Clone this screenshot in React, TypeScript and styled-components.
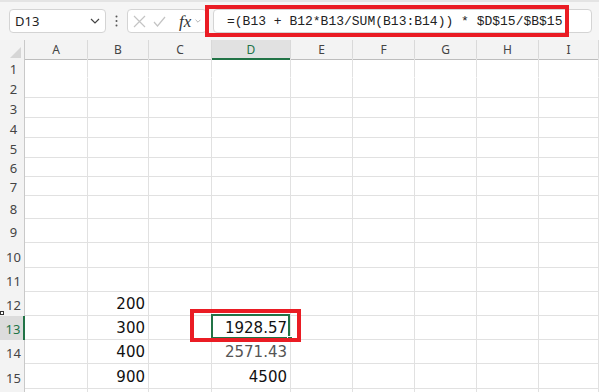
import React from 'react';
import styled, { createGlobalStyle } from 'styled-components';

const Global = createGlobalStyle`
  html, body { margin: 0; padding: 0; background: #ffffff; }
  body { font-family: "Noto Sans", "Liberation Sans", sans-serif; }
  * { box-sizing: border-box; }
`;

const GRID = '25px 63px 61px 63px 79px 62px 62px 62px 62px 1fr';
const GREEN = '#217346';
const RED = '#ea1c24';

const Page = styled.div`
  width: 599px;
  height: 392px;
  overflow: hidden;
  display: flex;
  flex-direction: column;
  background: #ffffff;
`;

const Toolbar = styled.div`
  height: 40px;
  flex: none;
  display: flex;
  align-items: flex-start;
  padding: 7px 7px 0 9px;
  background: #f5f5f5;
  border-top: 2px solid #e4e4e4;
`;

const NameBox = styled.div`
  width: 97px;
  height: 24px;
  display: flex;
  align-items: center;
  justify-content: space-between;
  padding: 0 5px 0 5px;
  background: #ffffff;
  border: 1px solid #d4d4d4;
  border-radius: 4px;
  font-size: 13px;
  color: #222;
`;

const Dots = styled.div`
  width: 21px;
  height: 24px;
  display: flex;
  align-items: center;
  justify-content: center;
`;

const FnBox = styled.div`
  width: 80px;
  height: 24px;
  display: flex;
  align-items: center;
  padding-left: 5px;
  background: #ffffff;
  border: 1px solid #d4d4d4;
  border-radius: 4px;
`;

const FnIcon = styled.span<{ $gap: number }>`
  display: flex;
  align-items: center;
  margin-right: ${p => p.$gap}px;
`;

const Fx = styled.span`
  font-family: "Liberation Serif", "DejaVu Serif", serif;
  font-style: italic;
  font-size: 17px;
  line-height: 1;
  color: #333;
  margin-right: 4px;
`;

const FormulaWrap = styled.div`
  position: relative;
  flex: 1;
  margin-left: 6px;
  height: 24px;
`;

const FormulaInput = styled.div`
  height: 24px;
  display: flex;
  align-items: center;
  padding-left: 13px;
  background: #ffffff;
  border: 1px solid #d4d4d4;
  border-radius: 4px;
  font-family: "Liberation Mono", "DejaVu Sans Mono", monospace;
  font-size: 13px;
  color: #222;
  white-space: pre;
`;

const Highlight = styled.div<{ $l: number; $t: number; $r: number; $b: number }>`
  position: absolute;
  left: ${p => p.$l}px;
  top: ${p => p.$t}px;
  right: ${p => p.$r}px;
  bottom: ${p => p.$b}px;
  border: 4px solid ${RED};
  z-index: 5;
  pointer-events: none;
`;

const Sheet = styled.div`
  flex: 1;
  display: flex;
  flex-direction: column;
`;

const Row = styled.div<{ $h: number }>`
  display: grid;
  grid-template-columns: ${GRID};
  height: ${p => p.$h}px;
  flex: none;
`;

const Corner = styled.div`
  background: #f3f3f3;
  border-right: 1px solid #c9c9c9;
  border-bottom: 1px solid #bdbdbd;
  display: flex;
  align-items: flex-end;
  justify-content: flex-end;
  padding: 0 3px 1px 0;
`;

const ColHead = styled.div<{ $sel?: boolean }>`
  background: ${p => (p.$sel ? '#e1e1e1' : '#f3f3f3')};
  border-right: 1px solid #d9d9d9;
  border-bottom: ${p => (p.$sel ? `2px solid ${GREEN}` : '1px solid #bdbdbd')};
  display: flex;
  align-items: center;
  justify-content: center;
  font-size: 12px;
  color: ${p => (p.$sel ? GREEN : '#444')};
  padding-top: ${p => (p.$sel ? 1 : 0)}px;
`;

const RowHead = styled.div<{ $sel?: boolean }>`
  position: relative;
  background: ${p => (p.$sel ? '#dcdcdc' : '#f3f3f3')};
  border-right: ${p => (p.$sel ? `2px solid ${GREEN}` : '1px solid #c9c9c9')};
  display: flex;
  align-items: center;
  justify-content: center;
  padding: 2px 0 0 3px;
  font-size: 13px;
  color: ${p => (p.$sel ? GREEN : '#444')};
`;

const Marker = styled.div`
  position: absolute;
  left: 0;
  bottom: 1px;
  width: 4px;
  height: 4px;
  border: 1px solid #333;
  background: #fff;
`;

const Cell = styled.div<{ $line: boolean; $muted?: boolean }>`
  position: relative;
  border-right: 1px solid #e1e1e1;
  border-bottom: 1px solid ${p => (p.$line ? '#e1e1e1' : 'transparent')};
  display: flex;
  align-items: flex-end;
  justify-content: flex-end;
  padding: 0 3px 3px 0;
  font-family: "DejaVu Sans", "Liberation Sans", sans-serif;
  font-size: 15px;
  line-height: 1;
  color: ${p => (p.$muted ? '#555' : '#111')};
`;

const Selection = styled.div`
  position: absolute;
  left: -1px;
  top: -2px;
  right: 0;
  bottom: 0;
  border: 2px solid ${GREEN};
  z-index: 3;
  pointer-events: none;
`;

const FillHandle = styled.div`
  position: absolute;
  right: -3px;
  bottom: -3px;
  width: 6px;
  height: 6px;
  background: ${GREEN};
  border: 1px solid #fff;
  z-index: 4;
`;

const COLS = ['A', 'B', 'C', 'D', 'E', 'F', 'G', 'H', 'I'];

type RowData = { n: number; h: number; line?: boolean; b?: string; d?: string; hideLabel?: boolean };

const ROWS: RowData[] = [
  { n: 1, h: 20, line: false },
  { n: 2, h: 20 },
  { n: 3, h: 20 },
  { n: 4, h: 20 },
  { n: 5, h: 19 },
  { n: 6, h: 19 },
  { n: 7, h: 20 },
  { n: 8, h: 23 },
  { n: 9, h: 24 },
  { n: 10, h: 25 },
  { n: 11, h: 24 },
  { n: 12, h: 24, b: '200' },
  { n: 13, h: 24, b: '300', d: '1928.57' },
  { n: 14, h: 24, b: '400', d: '2571.43' },
  { n: 15, h: 25, b: '900', d: '4500' },
  { n: 16, h: 24, hideLabel: true },
];

const Chevron = ({ w, color }: { w: number; color: string }) => (
  <svg width={w} height={w / 2 + 1} viewBox="0 0 10 6">
    <polyline points="1,1 5,5 9,1" fill="none" stroke={color} strokeWidth="1.2" />
  </svg>
);

export default function App() {
  return (
    <Page>
      <Global />
      <Toolbar>
        <NameBox>
          <span>D13</span>
          <Chevron w={10} color="#444" />
        </NameBox>
        <Dots>
          <svg width="3" height="12" viewBox="0 0 3 12">
            <circle cx="1.5" cy="1.5" r="1" fill="#555" />
            <circle cx="1.5" cy="6" r="1" fill="#555" />
            <circle cx="1.5" cy="10.5" r="1" fill="#555" />
          </svg>
        </Dots>
        <FnBox>
          <FnIcon $gap={7}>
            <svg width="13" height="13" viewBox="0 0 13 13">
              <path d="M1 1 L12 12 M12 1 L1 12" stroke="#c4c4c4" strokeWidth="1.2" fill="none" />
            </svg>
          </FnIcon>
          <FnIcon $gap={13}>
            <svg width="13" height="11" viewBox="0 0 13 11">
              <polyline points="1,6 4.5,10 12,1" stroke="#c4c4c4" strokeWidth="1.2" fill="none" />
            </svg>
          </FnIcon>
          <Fx>fx</Fx>
          <Chevron w={6} color="#999" />
        </FnBox>
        <FormulaWrap>
          <FormulaInput>=(B13 + B12*B13/SUM(B13:B14)) * $D$15/$B$15</FormulaInput>
          <Highlight $l={-8} $t={-4} $r={23} $b={-4} />
        </FormulaWrap>
      </Toolbar>
      <Sheet>
        <Row $h={18}>
          <Corner>
            <svg width="11" height="11" viewBox="0 0 11 11">
              <polygon points="11,0 11,11 0,11" fill="#d6d6d6" />
            </svg>
          </Corner>
          {COLS.map(c => (
            <ColHead key={c} $sel={c === 'D'}>
              {c}
            </ColHead>
          ))}
        </Row>
        {ROWS.map(r => {
          const line = r.line !== false;
          return (
            <Row key={r.n} $h={r.h}>
              <RowHead $sel={r.n === 13}>
                {r.hideLabel ? null : r.n}
                {r.n === 12 && <Marker />}
              </RowHead>
              {COLS.map(c => {
                if (c === 'B') {
                  return (
                    <Cell key={c} $line={line}>
                      {r.b}
                    </Cell>
                  );
                }
                if (c === 'D') {
                  return (
                    <Cell key={c} $line={line} $muted={r.n === 14}>
                      {r.d}
                      {r.n === 13 && (
                        <>
                          <Selection />
                          <FillHandle />
                          <Highlight $l={-22} $t={-7} $r={-11} $b={-3} />
                        </>
                      )}
                    </Cell>
                  );
                }
                return <Cell key={c} $line={line} />;
              })}
            </Row>
          );
        })}
      </Sheet>
    </Page>
  );
}
